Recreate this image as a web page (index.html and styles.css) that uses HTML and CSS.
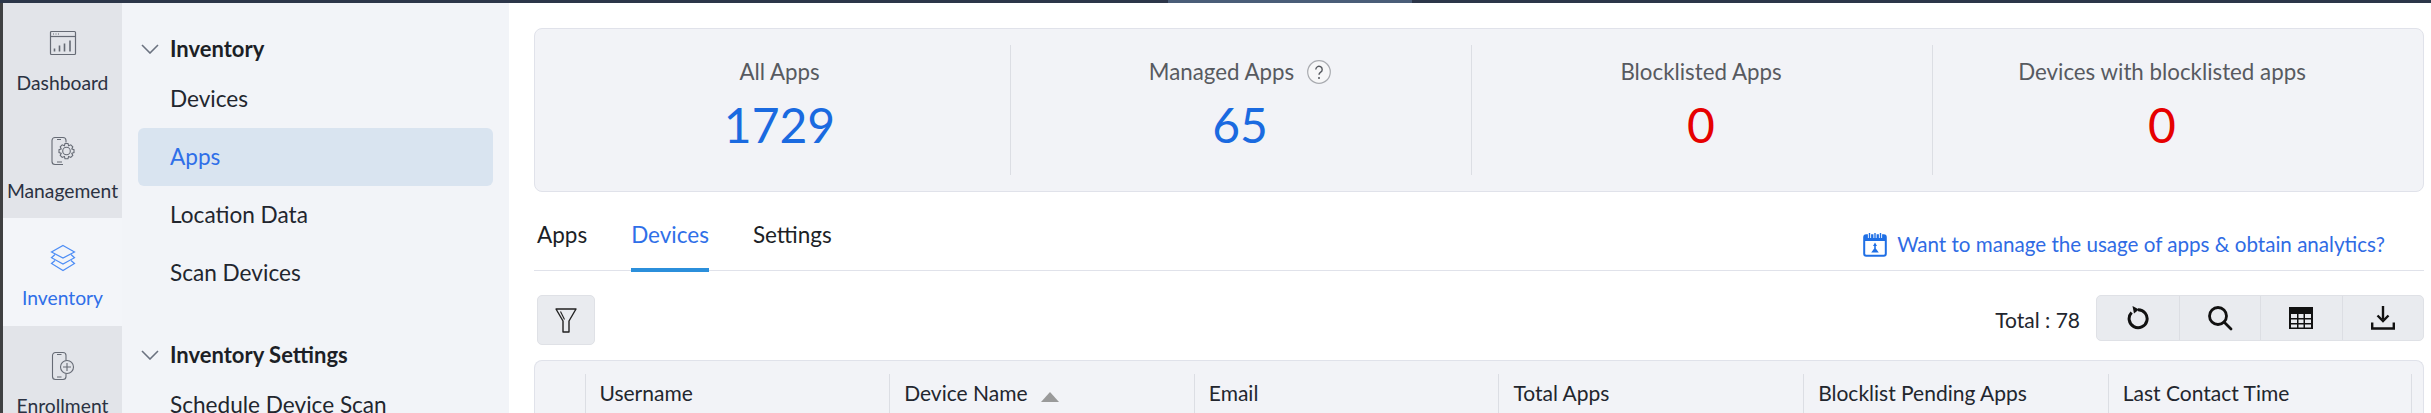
FILE: index.html
```html
<!DOCTYPE html>
<html lang="en">
<head>
    <meta charset="UTF-8">
    <title>Inventory - Apps</title>
    <link rel="stylesheet" href="styles.css">
</head>
<body>
    <div class="topbar"><div class="topbar-tab"></div></div>

    <div class="app">
        <!-- Main module rail -->
        <div class="rail">
            <div class="rail-item">
                <div class="rail-icon">
                    <svg width="28" height="26" viewBox="0 0 28 26" fill="none" stroke="#666b75" stroke-width="1.2">
                        <rect x="1.500" y="1.500" width="25" height="23" rx="1"/>
                        <path d="M1.500 6.500h25"/>
                        <path d="M4 4h1M6.500 4h1M9 4h1"/>
                        <path d="M5.500 21.500v-3M10.500 21.500v-6M15.500 21.500v-8M21 21.500v-11" stroke-width="1.600"/>
                    </svg>
                </div>
                <div class="rail-label">Dashboard</div>
            </div>
            <div class="rail-item">
                <div class="rail-icon">
                    <svg width="26" height="30" viewBox="0 0 26 30" fill="none" stroke="#666b75" stroke-width="1.100">
                        <path d="M13 28.500H5a3 3 0 0 1-3-3v-21a3 3 0 0 1 3-3h8a3 3 0 0 1 3 3v2"/>
                        <path d="M7 3.500h4M7 26h5"/>
                        <circle cx="16.500" cy="15" r="3.800"/>
                        <path d="M15 7.500h3l.6 2.200 2.200-.9 2 2-1 2.100 2.200.8v2.800l-2.200.8 1 2.100-2 2-2.200-.9-.6 2.200h-3l-.6-2.200-2.200.9-2-2 1-2.100-2.200-.8v-2.800l2.200-.8-1-2.100 2-2 2.200.9z"/>
                    </svg>
                </div>
                <div class="rail-label">Management</div>
            </div>
            <div class="rail-item active">
                <div class="rail-icon">
                    <svg width="26" height="28" viewBox="0 0 26 28" fill="none" stroke="#4d8df5" stroke-width="1.200">
                        <path d="M13 1.500l11.500 6.500L13 14 1.500 8z"/>
                        <path d="M5 10.500l-3.500 3.200L13 20l11.500-6.300L21 10.500"/>
                        <path d="M5 16.500l-3.500 3L13 26.500l11.500-7-3.500-3"/>
                    </svg>
                </div>
                <div class="rail-label">Inventory</div>
            </div>
            <div class="rail-item">
                <div class="rail-icon">
                    <svg width="24" height="30" viewBox="0 0 24 30" fill="none" stroke="#666b75" stroke-width="1.100">
                        <path d="M15 9.500V4.500a3 3 0 0 0-3-3H4.500a3 3 0 0 0-3 3v21a3 3 0 0 0 3 3H12a3 3 0 0 0 3-3v-3"/>
                        <path d="M6 3.500h4.500M6 26h4.500"/>
                        <circle cx="16" cy="16" r="6.500"/>
                        <path d="M16 12v8M12 16h8"/>
                    </svg>
                </div>
                <div class="rail-label">Enrollment</div>
            </div>
        </div>

        <!-- Sub navigation -->
        <div class="sidenav">
            <div class="nav-heading">
                <svg class="chevron" width="18" height="10" viewBox="0 0 18 10" fill="none" stroke="#6b7280" stroke-width="1.600"><path d="M1 1l8 8 8-8"/></svg>
                Inventory
            </div>
            <div class="nav-link">Devices</div>
            <div class="nav-link selected">Apps</div>
            <div class="nav-link">Location Data</div>
            <div class="nav-link">Scan Devices</div>
            <div class="nav-heading second">
                <svg class="chevron" width="18" height="10" viewBox="0 0 18 10" fill="none" stroke="#6b7280" stroke-width="1.600"><path d="M1 1l8 8 8-8"/></svg>
                Inventory Settings
            </div>
            <div class="nav-link">Schedule Device Scan</div>
        </div>

        <div class="main">
            <div class="stats">
                <div class="stat">
                    <div class="stat-label">All Apps</div>
                    <div class="stat-value">1729</div>
                </div>
                <div class="stat">
                    <div class="stat-label">Managed Apps
                        <svg class="help" width="24" height="24" viewBox="0 0 24 24" fill="none"><circle cx="12" cy="12" r="11.300" fill="#f7f7f8" stroke="#a9abb0" stroke-width="1.200"/><path d="M8.800 9.500a3.200 3.200 0 1 1 4.900 2.700c-1.100.7-1.700 1.300-1.700 2.600" stroke="#55585e" stroke-width="1.400"/><circle cx="12" cy="18" r="1" fill="#55585e"/></svg>
                    </div>
                    <div class="stat-value">65</div>
                </div>
                <div class="stat">
                    <div class="stat-label">Blocklisted Apps</div>
                    <div class="stat-value danger">0</div>
                </div>
                <div class="stat">
                    <div class="stat-label">Devices with blocklisted apps</div>
                    <div class="stat-value danger">0</div>
                </div>
            </div>

            <div class="tabs-row">
                <div class="tabs">
                    <div class="tab">Apps</div>
                    <div class="tab current">Devices</div>
                    <div class="tab">Settings</div>
                </div>
                <div class="promo">
                    <svg width="24" height="25" viewBox="0 0 24 25">
                        <rect x="1.200" y="3.200" width="21.600" height="20.600" rx="2" fill="#fff" stroke="#1f6fe5" stroke-width="2"/>
                        <rect x="1.200" y="3.200" width="21.600" height="5.800" fill="#1f6fe5"/>
                        <path d="M6.500 1v5M12 1v5M17.500 1v5" stroke="#fff" stroke-width="3.200" fill="none"/>
                        <path d="M6.500 1v5M12 1v5M17.500 1v5" stroke="#1f6fe5" stroke-width="1.400" fill="none"/>
                        <path d="M12 10.500l2 3.500h-1.200v2.500l3 4H8.200l3-4V14H10z" fill="#1f6fe5"/>
                    </svg>
                    Want to manage the usage of apps &amp; obtain analytics?
                </div>
            </div>

            <div class="toolbar">
                <div class="filter-btn">
                    <svg width="22" height="25" viewBox="0 0 22 25" fill="none" stroke="#222" stroke-width="1.400">
                        <path d="M1 1h20l-7 12v11H8V13z" stroke-linejoin="round"/>
                        <path d="M5.500 3.500l4 8" stroke-width="1.100"/>
                    </svg>
                </div>
                <div class="toolbar-right">
                    <div class="total">Total : 78</div>
                    <div class="btn-group">
                        <div class="tool-btn">
                            <svg width="24" height="24" viewBox="0 0 24 24" fill="none" stroke="#111" stroke-width="3">
                                <path d="M5.600 6.500a9 9 0 1 0 6.400-2.800"/>
                                <path d="M6.500 0l6.500 3.500-5 4z" fill="#111" stroke="none"/>
                            </svg>
                        </div>
                        <div class="tool-btn">
                            <svg width="26" height="26" viewBox="0 0 26 26" fill="none" stroke="#111" stroke-width="2.800">
                                <circle cx="11" cy="11" r="8.500"/>
                                <path d="M17 17l7 7" stroke-linecap="round"/>
                            </svg>
                        </div>
                        <div class="tool-btn">
                            <svg width="24" height="22" viewBox="0 0 24 22">
                                <rect width="24" height="22" fill="#111"/>
                                <path d="M2 7h6v4H2zM9.500 7h5v4h-5zM16 7h6v4h-6zM2 12.500h6v3.500H2zM9.500 12.500h5v3.500h-5zM16 12.500h6v3.500h-6zM2 17.500h6v3H2zM9.500 17.500h5v3h-5zM16 17.500h6v3h-6z" fill="#e9ebef"/>
                            </svg>
                        </div>
                        <div class="tool-btn">
                            <svg width="24" height="24" viewBox="0 0 24 24" fill="none" stroke="#111" stroke-width="2.400">
                                <path d="M12 0v13"/>
                                <path d="M6.500 9.500l5.500 5.500 5.500-5.500"/>
                                <path d="M1.200 16.500v6h21.600v-6"/>
                            </svg>
                        </div>
                    </div>
                </div>
            </div>

            <div class="table-head">
                <div class="col-check"></div>
                <div class="col">Username</div>
                <div class="col">Device Name <span class="sort"></span></div>
                <div class="col">Email</div>
                <div class="col">Total Apps</div>
                <div class="col">Blocklist Pending Apps</div>
                <div class="col">Last Contact Time</div>
            </div>
        </div>
    </div>
</body>
</html>
```

FILE: styles.css
```css
* {
    box-sizing: border-box;
    margin: 0;
    padding: 0;
}

html, body {
    height: 413px;
    overflow: hidden;
}

body {
    font-family: 'Lato', sans-serif;
    background: #ffffff;
    color: #22262e;
}

.topbar {
    height: 3px;
    background: #2c3649;
    padding-left: 1168px;
}

.topbar-tab {
    width: 244px;
    height: 3px;
    background: #4a5d78;
}

.app {
    display: flex;
    height: 410px;
}

/* Rail */
.rail {
    width: 122px;
    flex-shrink: 0;
    background: #e2e4e9;
    border-left: 3px solid #3f4042;
}

.rail-item {
    height: 107.5px;
    padding-top: 23px;
    text-align: center;
}

.rail-item.active {
    background: #f3f5f9;
}

.rail-icon {
    height: 34px;
    display: flex;
    align-items: center;
    justify-content: center;
    margin-bottom: 12px;
}

.rail-label {
    font-size: 19.3px;
    line-height: 22px;
    color: #2b3242;
    white-space: nowrap;
}

.rail-item.active .rail-label {
    color: #2f6fe8;
}

/* Sub nav */
.sidenav {
    width: 387px;
    flex-shrink: 0;
    background: #f2f4f8;
    padding: 25px 16px 0;
}

.nav-heading {
    position: relative;
    height: 42px;
    line-height: 42px;
    padding-left: 32px;
    font-size: 22px;
    font-weight: 700;
    color: #1c1f26;
}

.nav-heading.second {
    margin-top: 32px;
}

.chevron {
    position: absolute;
    left: 3px;
    top: 16px;
}

.nav-link {
    height: 58px;
    line-height: 58px;
    padding-left: 32px;
    font-size: 22.6px;
    color: #22262e;
    border-radius: 6px;
}

.nav-link.selected {
    background: #d9e4f0;
    color: #2f6fe8;
}

/* Main */
.main {
    flex: 1;
    padding: 25px 8px 0 25px;
}

.stats {
    height: 164px;
    background: #f2f3f7;
    border: 1px solid #e0e2ea;
    border-radius: 8px;
    padding: 16px 30px 16px 14px;
    display: grid;
    grid-template-columns: repeat(4, 461px);
}

.stat {
    padding: 11px 2px 0 0;
    text-align: center;
    border-left: 1px solid #dcdee4;
}

.stat:first-child {
    border-left: none;
    padding-right: 0;
}

.stat-label {
    height: 32px;
    line-height: 32px;
    font-size: 22.3px;
    color: #575a60;
    display: flex;
    align-items: center;
    justify-content: center;
    gap: 13px;
}

.help {
    flex-shrink: 0;
}

.stat-value {
    margin-top: 2px;
    font-size: 48px;
    line-height: 70px;
    color: #1a6ae0;
}

.stat-value.danger {
    color: #e60000;
}

.tabs-row {
    display: flex;
    justify-content: space-between;
    border-bottom: 1px solid #e0e2ea;
    height: 79px;
}

.tabs {
    display: flex;
    gap: 44px;
    padding: 29px 0 0 3px;
}

.tab {
    height: 51px;
    line-height: 28px;
    font-size: 22.5px;
    color: #1c1f26;
}

.tab.current {
    color: #2f6fe8;
    border-bottom: 4px solid #2b8fdb;
}

.promo {
    display: flex;
    align-items: center;
    gap: 10px;
    height: 28px;
    margin: 38px 39px 0 0;
    font-size: 20.6px;
    color: #2f6be4;
}

.toolbar {
    display: flex;
    justify-content: space-between;
    align-items: flex-start;
    padding: 24px 0 0 3px;
    height: 89px;
}

.filter-btn {
    width: 58px;
    height: 50px;
    background: #e9ebef;
    border: 1px solid #dfe1e6;
    border-radius: 5px;
    display: flex;
    align-items: center;
    justify-content: center;
}

.toolbar-right {
    display: flex;
    align-items: flex-start;
    gap: 16px;
}

.total {
    font-size: 21px;
    line-height: 50px;
    color: #22262e;
}

.btn-group {
    display: flex;
    height: 46px;
    background: #e9ebef;
    border: 1px solid #dfe1e6;
    border-radius: 5px;
}

.tool-btn {
    width: 81.5px;
    display: flex;
    align-items: center;
    justify-content: center;
    border-left: 1px solid #dcdee3;
}

.tool-btn:first-child {
    border-left: none;
}

.table-head {
    display: grid;
    grid-template-columns: 49.5px repeat(6, 304.67px);
    height: 53px;
    padding-top: 13px;
    background: #f2f3f7;
    border: 1px solid #e0e2ea;
    border-bottom: none;
    border-radius: 8px 8px 0 0;
}

.col {
    height: 40px;
    line-height: 38px;
    padding-left: 14px;
    font-size: 21px;
    color: #22262e;
    border-left: 1px solid #dcdee4;
}

.col:last-child {
    border-right: 1px solid #dcdee4;
}

.sort {
    display: inline-block;
    margin-left: 8px;
    vertical-align: -1px;
    border-left: 9px solid transparent;
    border-right: 9px solid transparent;
    border-bottom: 10px solid #9a9a9a;
}
```
